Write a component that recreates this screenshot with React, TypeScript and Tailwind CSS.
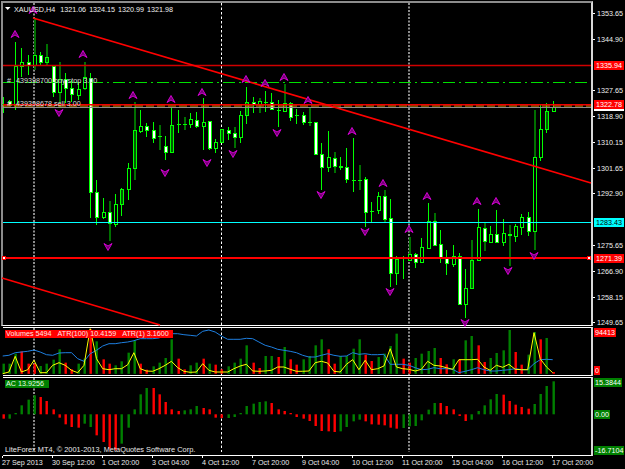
const candles: [number, number, number, number, string][] = [
  [97,113,104,104,'f'],[100,106,101,105,'w'],[42,110,66,105,'h'],[48,77,62,66,'h'],[55,75,62,65,'w'],[18,70,55,65,'H'],
  [52,65,55,62,'w'],[44,66,57,62,'D'],[65,97,66,92,'w'],[62,107,79,92,'H'],[73,103,79,88,'w'],[80,102,88,94,'w'],
  [83,100,89,95,'h'],[62,90,77,88,'H'],[73,218,78,192,'w'],[180,225,192,217,'w'],[198,219,212,217,'h'],[201,241,212,223,'W'],
  [194,227,204,224,'h'],[188,216,189,204,'d'],[163,200,168,189,'h'],[102,180,130,168,'D'],[110,133,126,131,'h'],[123,137,126,130,'w'],
  [122,143,130,138,'w'],[125,150,136,138,'F'],[136,160,146,152,'w'],[107,153,125,152,'d'],[110,133,124,124,'f'],[117,130,124,124,'F'],
  [113,128,119,124,'h'],[112,128,120,126,'w'],[98,150,122,126,'h'],[121,150,121,148,'w'],
  [139,153,142,148,'h'],[129,142,129,142,'D'],[127,140,130,133,'w'],[127,148,133,137,'W'],[111,143,115,137,'h'],[87,124,102,115,'d'],
  [97,113,102,104,'w'],[98,113,101,104,'H'],[91,112,102,102,'f'],[93,110,102,109,'w'],[100,127,110,110,'f'],[84,111,103,111,'H'],
  [102,121,103,117,'w'],[109,124,115,115,'f'],[112,125,115,122,'w'],[107,126,122,122,'F'],[122,154,122,154,'w'],[143,190,154,167,'w'],
  [131,172,157,167,'h'],[152,173,158,166,'W'],[157,170,166,166,'w'],[148,183,167,179,'w'],[138,192,180,180,'f'],[165,190,180,180,'F'],
  [177,227,179,212,'w'],[202,222,211,211,'f'],[192,214,196,210,'h'],[190,222,196,219,'W'],[199,287,218,273,'w'],[256,285,259,273,'d'],
  [256,279,258,258,'f'],[237,260,254,260,'H'],[253,268,254,262,'w'],
  [238,263,247,262,'h'],[203,249,221,248,'h'],[213,246,221,245,'W'],[230,263,244,257,'w'],[250,275,257,263,'w'],[245,267,256,264,'h'],
  [253,304,256,304,'w'],[269,318,288,304,'h'],[240,288,260,288,'D'],[209,261,227,260,'h'],[223,251,228,241,'W'],[226,242,234,242,'h'],
  [210,242,234,242,'w'],[219,246,233,242,'h'],[225,266,234,234,'W'],[224,242,226,236,'h'],[214,235,217,227,'h'],[212,236,217,231,'w'],
  [110,250,157,231,'H'],[105,161,129,157,'h'],[103,133,111,129,'d'],[101,111,107,111,'h'],
];

const x = (i: number) => 2.7 + 6.25 * i;

const volZ: [number, string][] = [
  [125,'g'],[125,'g'],[95,'g'],[88,'r'],[125,'r'],[125,'r'],[132,'g'],[125,'g'],[113,'g'],[82,'g'],[122,'r'],[142,'r'],[125,'g'],[110,'g'],[22,'r'],[58,'g'],[112,'r'],[125,'r'],[130,'g'],[118,'g'],[92,'g'],[55,'g'],[125,'r'],[143,'r'],[133,'g'],[122,'g'],[108,'g'],[52,'g'],[110,'r'],[142,'r'],[130,'g'],[122,'g'],[110,'r'],[125,'g'],
  [128,'r'],[142,'r'],[133,'g'],[122,'g'],[110,'g'],[70,'g'],[122,'r'],[138,'r'],[102,'g'],[102,'g'],[105,'r'],[75,'g'],[112,'r'],[128,'r'],[112,'g'],[102,'g'],[70,'g'],[52,'g'],[82,'r'],[125,'r'],[102,'g'],[102,'g'],[80,'g'],[52,'g'],[98,'r'],[117,'r'],[105,'g'],[95,'g'],[72,'g'],[35,'g'],[110,'r'],[122,'r'],[108,'g'],
  [95,'g'],[87,'g'],[78,'g'],[108,'r'],[127,'r'],[112,'g'],[113,'r'],[55,'g'],[42,'g'],[70,'r'],[120,'r'],[108,'g'],[93,'g'],[85,'g'],[24,'g'],[90,'r'],[128,'r'],[98,'g'],[30,'g'],[52,'r'],[48,'g'],[150,'r'],
];

const acZ: [number, string][] = [
  [290,'r'],[290,'g'],[273,'g'],[250,'g'],[233,'g'],[220,'g'],[225,'r'],[237,'r'],[262,'r'],[287,'r'],[307,'r'],[315,'r'],[317,'r'],[305,'g'],[315,'g'],[340,'r'],[360,'r'],[380,'r'],[385,'r'],[365,'g'],[317,'g'],[262,'g'],[217,'g'],[198,'g'],[198,'r'],[217,'r'],[240,'r'],[262,'r'],[267,'r'],[265,'g'],[262,'g'],[252,'g'],[258,'r'],[262,'r'],
  [287,'r'],[288,'r'],[288,'g'],[285,'g'],[273,'g'],[252,'g'],[245,'g'],[240,'g'],[238,'g'],[243,'r'],[262,'r'],[267,'r'],[273,'r'],[285,'r'],[290,'r'],[297,'r'],[312,'r'],[327,'r'],[328,'r'],[330,'r'],[328,'g'],[315,'g'],[298,'g'],[293,'g'],[298,'r'],[307,'r'],[308,'r'],[310,'r'],[317,'r'],[320,'r'],[318,'g'],[313,'g'],[312,'g'],
  [295,'g'],[263,'g'],[243,'g'],[243,'r'],[252,'r'],[262,'r'],[282,'r'],[297,'r'],[293,'g'],[267,'g'],[250,'g'],[232,'g'],[216,'g'],[218,'r'],[237,'r'],[248,'r'],[255,'r'],[260,'r'],[246,'g'],[216,'g'],[192,'g'],[178,'g'],
];

const yellowY = [155,150,103,150,143,115,152,152,130,122,130,145,152,130,20,110,140,143,140,140,128,92,140,147,148,140,130,118,137,148,151,150,125,145,
  150,150,150,140,132,127,147,148,147,145,135,135,142,148,148,147,122,118,123,148,150,127,113,143,115,143,140,132,80,135,140,142,147,
  142,118,130,132,137,142,113,113,113,112,135,145,130,136,127,142,143,143,32,110,135,152];
const blueY = [102,100,92,90,88,84,90,98,100,93,92,92,110,118,95,85,72,65,65,62,60,56,50,50,50,48,40,35,35,38,40,42,28,24,
  30,42,52,52,52,49,50,60,70,75,82,85,88,92,100,105,105,100,95,100,103,102,92,97,95,98,98,97,127,127,127,130,137,
  143,142,137,140,140,142,152,148,143,137,143,147,147,145,143,140,143,143,125,113,112,113];
const zy = (z: number) => 322 + z / 3;
const pts = (a: number[]) => a.map((v, i) => `${x(i).toFixed(1)},${zy(v).toFixed(1)}`).join(' ');

const upArrows = [[15,34],[33,10],[83,54],[133,95],[171,99],[202,92],[246,79],[265,83],[284,77],[308,100],[352,131],[383,183],[409,229],[427,196],[477,201],[496,201]];
const downArrows = [[59,113],[233,154],[277,133],[165,173],[108,247],[207,163],[321,195],[365,232],[390,292],[508,271],[534,256],[465,323]];

const prices: { y: number; t: string; c?: string }[] = [
  { y: 13, t: '1353.65' },{ y: 39, t: '1344.90' },{ y: 65.3, t: '1335.94', c: 'bg-[#ff0000] text-white' },{ y: 90, t: '1327.65' },
  { y: 116, t: '1318.90' },{ y: 142, t: '1310.15' },{ y: 168, t: '1301.65' },{ y: 193, t: '1292.90' },
  { y: 222, t: '1283.43', c: 'bg-[#00ffff] text-black' },{ y: 245, t: '1275.65' },{ y: 258, t: '1271.39', c: 'bg-[#ff0000] text-white' },
  { y: 271, t: '1266.90' },{ y: 297, t: '1258.15' },{ y: 322, t: '1249.65' },
];
const times = ['27 Sep 2013','30 Sep 12:00','1 Oct 20:00','3 Oct 04:00','4 Oct 12:00','7 Oct 20:00','9 Oct 04:00','10 Oct 12:00','11 Oct 20:00','15 Oct 04:00','16 Oct 12:00','17 Oct 20:00'];

function Label({ y, t, c, wide }: { y: number; t: string; c?: string; wide?: boolean }) {
  if (c) {
    return (
      <div className={`absolute left-px h-[9px] leading-[9px] ${wide ? 'w-[30px] pl-[2px]' : 'pl-px pr-px'} ${c}`} style={{ top: y - 4.5 }}>
        {t}
      </div>
    );
  }
  return (
    <div className="absolute left-0 flex items-center h-[9px]" style={{ top: y - 4.5 }}>
      <div className="w-[2px] h-px bg-white" />
      <div className="pl-[2px] h-[9px] leading-[9px] text-[#f0f0f0]">{t}</div>
    </div>
  );
}

function VLines({ top, bottom }: { top: number; bottom: number }) {
  return (
    <g>
      <line x1={34} x2={34} y1={top} y2={bottom} stroke="#9c9c9c" strokeWidth={1.8} strokeDasharray="2 1.5" />
      <line x1={221.5} x2={221.5} y1={top} y2={bottom} stroke="#ffffff" strokeWidth={1} strokeDasharray="2.5 2" />
      <line x1={409} x2={409} y1={top} y2={bottom} stroke="#9c9c9c" strokeWidth={1.8} strokeDasharray="2 1.5" />
    </g>
  );
}

export default function App() {
  return (
    <div className="relative w-[625px] h-[469px] bg-black overflow-hidden pt-px text-[7.2px] text-white" style={{ fontFamily: '"Liberation Sans", Arial, sans-serif' }}>
      {/* main pane */}
      <div className="flex h-[325px] mb-px">
        <div className="relative ml-px w-[592px] h-[325px] box-border border-l-2 border-t-2 border-r-2 border-b border-l-[#8c8c8c] border-t-[#8c8c8c] border-r-[#d8d8d8] border-b-white">
          <svg className="absolute inset-0 w-[588px] h-[322px] overflow-visible" viewBox="3 3 588 322">
            <VLines top={3} bottom={325} />
            {candles.map(([wt, wb, bt, bb, k], i) => {
              const cx = Math.round(x(i)) + 0.5;
              const thick = k === k.toUpperCase();
              const t = k.toLowerCase();
              return (
                <g key={i} shapeRendering="crispEdges">
                  <line x1={cx} x2={cx} y1={wt} y2={wb} stroke={thick ? '#007000' : '#00ff00'} strokeWidth={thick ? 2 : 1} />
                  {t === 'f' ? (
                    <rect x={cx - 2} y={bt} width={4} height={1} fill="#00ff00" />
                  ) : (
                    <rect x={cx - 1.5} y={bt} width={3} height={Math.max(bb - bt, 1)} fill={t === 'w' ? '#ffffff' : t === 'd' ? '#005a00' : '#000000'} stroke="#00ff00" strokeWidth={1} />
                  )}
                </g>
              );
            })}
            <line x1={3} x2={591} y1={65.5} y2={65.5} stroke="#d00000" strokeWidth={1.6} />
            <line x1={3} x2={591} y1={82.5} y2={82.5} stroke="#00e000" strokeWidth={1} strokeDasharray="12 4 2 4" />
            <line x1={3} x2={591} y1={107.5} y2={107.5} stroke="#8c8c8c" strokeWidth={1} />
            <line x1={3} x2={591} y1={106} y2={106} stroke="#e0a000" strokeWidth={1} strokeDasharray="8 3" />
            <line x1={3} x2={591} y1={104.7} y2={104.7} stroke="#f00000" strokeWidth={1.6} />
            <line x1={3} x2={591} y1={222.5} y2={222.5} stroke="#00ffff" strokeWidth={1} />
            <line x1={3} x2={591} y1={258} y2={258} stroke="#ff0000" strokeWidth={2} />
            <line x1={33} y1={18} x2={591} y2={183} stroke="#ff0000" strokeWidth={1.6} />
            <line x1={2} y1={278} x2={160} y2={325} stroke="#ff0000" strokeWidth={1.6} />
            <rect x={2.5} y={256.5} width={3} height={3} fill="#ffffff" stroke="#ff0000" strokeWidth={1} />
            <rect x={587.5} y={256.5} width={3} height={3} fill="#ffffff" stroke="#ff0000" strokeWidth={1} />
            {upArrows.map(([ax, ay], i) => (
              <path key={i} d={`M${ax - 4} ${ay + 3.5}L${ax} ${ay - 3.5}L${ax + 4} ${ay + 3.5}L${ax} ${ay + 1}Z`} fill="#700070" stroke="#e000e0" strokeWidth={0.9} />
            ))}
            {downArrows.map(([ax, ay], i) => (
              <path key={i} d={`M${ax - 4} ${ay - 3.5}L${ax} ${ay + 3.5}L${ax + 4} ${ay - 3.5}L${ax} ${ay - 1}Z`} fill="#700070" stroke="#e000e0" strokeWidth={0.9} />
            ))}
            <path d="M5 7H10.5L7.7 10Z" fill="#ffffff" />
          </svg>
          <div className="absolute left-[11px] top-[1.5px] flex gap-[3px] whitespace-nowrap text-[#f0f0f0] leading-[9px]">
            <span className="mr-[2px]">XAUUSD,H4</span><span>1321.06</span><span>1324.15</span><span>1320.99</span><span>1321.98</span>
          </div>
          <div className="absolute left-[4px] top-[73px] flex gap-[5px] whitespace-nowrap text-[#d8d8d8] leading-[9px]"><span>#</span><span>439398700 buy stop 3.00</span></div>
          <div className="absolute left-[4px] top-[96px] flex gap-[5px] whitespace-nowrap text-[#d8d8d8] leading-[9px]"><span>#</span><span>439398678 sell 3.00</span></div>
        </div>
        <div className="relative flex-1">
          {prices.map((p) => <Label key={p.t} y={p.y - 1} t={p.t} c={p.c} wide={!!p.c} />)}
          <div className="absolute left-px w-[30px] top-[108px] h-[2px] bg-white" />
          <Label y={103.3} t="1322.78" c="bg-[#ff0000] text-white" wide />
        </div>
      </div>

      {/* volumes pane */}
      <div className="flex h-[49px] mb-px">
        <div className="relative ml-[3px] w-[590px] h-[49px] box-border border-t border-b border-r-2 border-t-white border-b-white border-r-[#d8d8d8]">
          <svg className="absolute inset-0 w-[588px] h-[47px] overflow-visible" viewBox="3 328 588 47">
            <VLines top={328} bottom={375} />
            {volZ.map(([z, c], i) => (
              <rect key={i} x={Math.round(x(i)) - 0.5} y={zy(z)} width={2.4} height={373.8 - zy(z)} fill={c === 'r' ? '#ff0000' : '#008000'} />
            ))}
            <polyline points={pts(blueY)} fill="none" stroke="#1e7fe0" strokeWidth={1} />
            <polyline points={pts(yellowY)} fill="none" stroke="#ffff00" strokeWidth={1} />
          </svg>
          <div className="absolute left-[2px] top-[2px] h-[8px] w-[168px] bg-[#ff0000] text-[#ffe8e8] leading-[8px] pl-px flex gap-[6px] whitespace-nowrap">
            <span>Volumes 5494</span><span>ATR(100) 10.4159</span><span>ATR(1) 3.1600</span>
          </div>
        </div>
        <div className="relative flex-1">
          <Label y={5.7} t="94413" c="bg-[#ff0000] text-white" />
          <Label y={43.3} t="0" c="bg-[#ff0000] text-white" />
        </div>
      </div>

      {/* AC pane */}
      <div className="flex h-[79px]">
        <div className="relative ml-[3px] w-[590px] h-[79px] box-border border-t border-b border-r-2 border-t-white border-b-white border-r-[#d8d8d8]">
          <svg className="absolute inset-0 w-[588px] h-[77px] overflow-visible" viewBox="3 378 588 77">
            <VLines top={378} bottom={452} />
            {acZ.map(([z, c], i) => {
              const y0 = 414.3;
              const y1 = zy(z);
              return <rect key={i} x={Math.round(x(i)) - 0.5} y={Math.min(y0, y1)} width={2.4} height={Math.abs(y1 - y0)} fill={c === 'r' ? '#ff0000' : '#008000'} />;
            })}
          </svg>
          <div className="absolute left-[2px] top-[2px] h-[8px] w-[44px] bg-[#008000] text-[#e8ffe8] leading-[8px] pl-px whitespace-nowrap">AC 13.9256</div>
          <div className="absolute left-[2px] top-[67px] whitespace-nowrap text-[#e8e8e8] text-[7.4px] leading-[9px]">LiteForex MT4, © 2001-2013, MetaQuotes Software Corp.</div>
        </div>
        <div className="relative flex-1">
          <Label y={5.7} t="15.3844" c="bg-[#008000] text-white" />
          <Label y={37} t="0.00" c="bg-[#008000] text-white" />
          <Label y={73} t="-16.7104" c="bg-[#008000] text-white" />
        </div>
      </div>

      {/* time axis */}
      <div className="flex pl-[2px] h-[13px] leading-[9px] text-[#ececec]">
        {times.map((t) => (
          <div key={t} className="w-[50px] flex flex-col shrink-0 whitespace-nowrap">
            <div className="w-px h-[2px] bg-white" />
            <span>{t}</span>
          </div>
        ))}
      </div>
    </div>
  );
}
